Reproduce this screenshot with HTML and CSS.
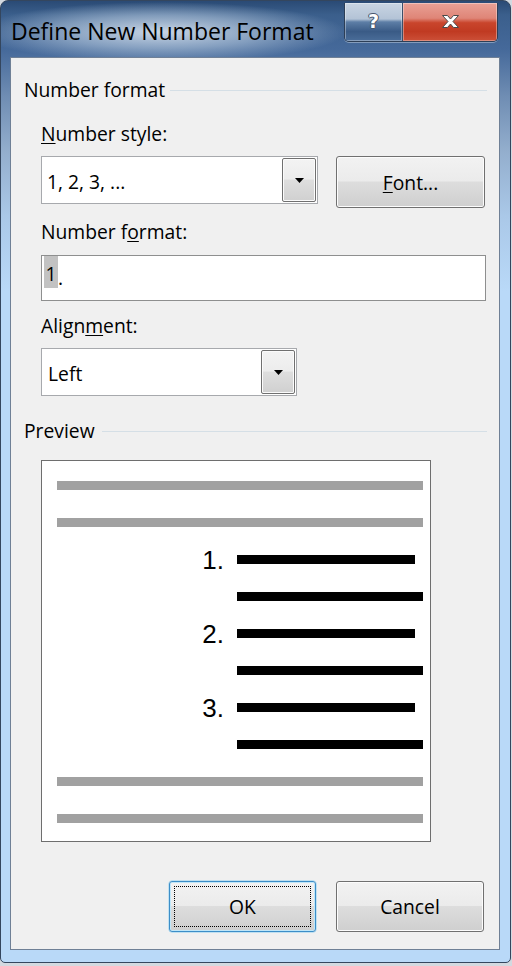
FILE: index.html
```html
<!DOCTYPE html>
<html>
<head>
<meta charset="utf-8">
<title>Define New Number Format</title>
<link rel="stylesheet" href="styles.css">
</head>
<body>
<div class="window">
  <div class="titlebar">
    <div class="title">Define New Number Format</div>
    <div class="caption">
      <div class="cap-btn help"><span class="qmark">?</span></div>
      <div class="cap-btn close">
        <svg width="19" height="15" viewBox="0 0 19 15"><path d="M1.5 1.5 H6.5 L9.5 5 L12.5 1.5 H17.5 L12 7.5 L17.5 13.5 H12.5 L9.5 10 L6.5 13.5 H1.5 L7 7.5 Z" fill="#ffffff" stroke="#4a4a4a" stroke-width="1" stroke-linejoin="round"/></svg>
      </div>
    </div>
  </div>
  <div class="client">
    <div class="group-head head-format"><span>Number format</span><span class="group-rule"></span></div>
    <div class="fields">
      <div class="label label-style"><u>N</u>umber style:</div>
      <div class="row">
        <div class="combo combo-style">
          <span class="combo-text">1, 2, 3, ...</span>
          <div class="drop"><svg width="9" height="5" viewBox="0 0 9 5"><path d="M0 0 H9 L4.5 5 Z" fill="#000"/></svg></div>
        </div>
        <div class="button font-btn"><span><u>F</u>ont...</span></div>
      </div>
      <div class="label label-format">Number f<u>o</u>rmat:</div>
      <div class="textbox"><span class="sel">1</span>.</div>
      <div class="label label-align">Align<u>m</u>ent:</div>
      <div class="combo combo-align">
        <span class="combo-text">Left</span>
        <div class="drop"><svg width="9" height="5" viewBox="0 0 9 5"><path d="M0 0 H9 L4.5 5 Z" fill="#000"/></svg></div>
      </div>
    </div>
    <div class="group-head head-preview"><span>Preview</span><span class="group-rule"></span></div>
    <div class="fields">
      <div class="preview">
        <div class="bar grey"></div>
        <div class="bar grey"></div>
        <div class="item"><span class="num">1.</span><div class="bar black short"></div></div>
        <div class="item"><div class="bar black long"></div></div>
        <div class="item"><span class="num">2.</span><div class="bar black short"></div></div>
        <div class="item"><div class="bar black long"></div></div>
        <div class="item"><span class="num">3.</span><div class="bar black short"></div></div>
        <div class="item"><div class="bar black long"></div></div>
        <div class="bar grey"></div>
        <div class="bar grey"></div>
      </div>
      <div class="actions">
        <div class="button ok-btn"><span>OK</span></div>
        <div class="button cancel-btn"><span>Cancel</span></div>
      </div>
    </div>
  </div>
</div>
</body>
</html>
```
FILE: styles.css
```css
* { box-sizing: border-box; }
html, body { margin: 0; padding: 0; }
body {
  width: 512px;
  height: 966px;
  overflow: hidden;
  background: #d3d9e0;
  font-family: "Open Sans", "Noto Sans", sans-serif;
  font-size: 19.3px;
  color: #000;
}
u { text-decoration: underline; text-underline-offset: 2px; text-decoration-thickness: 1px; }

.window {
  width: 511px;
  height: 963px;
  border: 1px solid #34465e;
  border-radius: 8px 8px 5px 5px;
  overflow: hidden;
  display: flex;
  flex-direction: column;
  background: linear-gradient(180deg, #2a4a75 0px, #3b5f8c 14px, #45699a 48px, #6f8db3 95px, #93aecd 150px, #aac8e8 215px, #b9d9f8 290px, #b9d9f8 100%);
}

.titlebar {
  height: 56px;
  flex: none;
  display: flex;
  align-items: flex-start;
  padding: 0 12px 0 10px;
  background:
    radial-gradient(ellipse 185px 30px at 160px 31px, rgba(208,220,234,0.95) 0%, rgba(176,196,218,0.6) 55%, rgba(150,175,205,0) 100%);
}
.title {
  flex: 1;
  margin-top: 16px;
  font-size: 23px;
  line-height: 28px;
  color: #000;
  white-space: nowrap;
}
.caption {
  display: flex;
  margin-top: 2px;
  height: 39px;
  border: 1px solid #2c3e56;
  border-top: none;
  border-radius: 0 0 5px 5px;
  overflow: hidden;
  box-shadow: 0 1px 0 rgba(255,255,255,0.35);
}
.cap-btn {
  height: 100%;
  display: flex;
  align-items: center;
  justify-content: center;
  box-shadow: inset 0 0 0 1px rgba(255,255,255,0.35);
}
.help {
  width: 58px;
  border-right: 1px solid #3b4f6a;
  background: linear-gradient(180deg, #c9d5e3 0%, #b3c3d6 42%, #5d7ea6 50%, #3a5b86 75%, #4a6d99 100%);
}
.qmark {
  font-family: "DejaVu Sans", "Liberation Sans", sans-serif;
  font-weight: bold;
  font-size: 19px;
  line-height: 20px;
  color: #ffffff;
  margin-top: -3px;
  text-shadow: 0 0 1px #33445a, 1px 0 0 #4a5a70, -1px 0 0 #4a5a70, 0 1px 0 #4a5a70, 0 -1px 0 #4a5a70;
}
.close {
  width: 94px;
  background: linear-gradient(180deg, #e9a196 0%, #df8577 40%, #c9452c 52%, #c03a22 75%, #cc5038 100%);
}
.close svg { margin-top: -2px; }

.client {
  width: 490px;
  height: 893px;
  flex: none;
  margin-left: 9px;
  background: #f0f0f0;
  border: 1px solid #6f8096;
  padding: 0 12px 0 13px;
  display: flex;
  flex-direction: column;
}

.group-head {
  display: flex;
  align-items: center;
  height: 24px;
  line-height: 24px;
  white-space: nowrap;
}
.head-format { margin-top: 20px; }
.head-preview { margin-top: 23px; }
.group-rule {
  flex: 1;
  height: 1px;
  background: #d5dfe6;
  margin-left: 5px;
}
.head-preview .group-rule { margin-left: 7px; }

.fields {
  padding-left: 17px;
  display: flex;
  flex-direction: column;
  align-items: flex-start;
}
.label {
  height: 24px;
  line-height: 24px;
  white-space: nowrap;
}
.label-style { margin-top: 20px; }
.label-format { margin-top: 12px; }
.label-align { margin-top: 13px; }

.row {
  display: flex;
  align-items: flex-start;
  margin-top: 10px;
}

.combo {
  height: 48px;
  background: #fff;
  border: 1px solid #a7a9ad;
  padding: 1px;
  display: flex;
  align-items: center;
}
.combo-style { width: 277px; }
.combo-align { width: 256px; margin-top: 10px; }
.combo-text {
  flex: 1;
  padding-left: 4px;
  padding-top: 2px;
  white-space: nowrap;
}
.combo-align .combo-text { padding-left: 5px; }
.drop {
  width: 34px;
  height: 44px;
  border: 1px solid #707070;
  border-radius: 2px;
  box-shadow: inset 0 0 0 1px #fbfbfb;
  background: linear-gradient(180deg, #f3f3f3 0%, #ececec 48%, #dedede 50%, #d0d0d0 100%);
  display: flex;
  align-items: center;
  justify-content: center;
}

.button {
  border: 1px solid #707070;
  border-radius: 3px;
  box-shadow: inset 0 0 0 1px #fcfcfc;
  background: linear-gradient(180deg, #f2f2f2 0%, #ebebeb 48%, #dddddd 50%, #cfcfcf 100%);
  display: flex;
  align-items: center;
  justify-content: center;
  white-space: nowrap;
}
.font-btn {
  width: 149px;
  height: 52px;
  margin-left: 18px;
}

.textbox {
  margin-top: 11px;
  width: 445px;
  height: 46px;
  background: #fff;
  border: 1px solid #8e8f8f;
  padding: 0 0 0 2px;
  white-space: nowrap;
  line-height: 44px;
}
.sel {
  display: inline-block;
  height: 32px;
  line-height: 35px;
  padding: 0 1.5px;
  background: #c2c2c2;
  vertical-align: top;
}

.preview {
  margin-top: 17px;
  width: 390px;
  height: 382px;
  background: #fff;
  border: 1px solid #6e6e6e;
  padding: 20px 7px 0 15px;
  display: flex;
  flex-direction: column;
  gap: 28px;
}
.bar { height: 9px; flex: none; }
.grey { width: 366px; background: #a1a1a1; }
.item {
  height: 9px;
  display: flex;
  align-items: center;
  padding-left: 180px;
  position: relative;
}
.item .num {
  position: absolute;
  left: 0;
  top: 1px;
  width: 167px;
  height: 9px;
  text-align: right;
  font-family: "Liberation Sans", Arial, sans-serif;
  font-size: 26px;
  line-height: 9px;
  white-space: nowrap;
}
.black { background: #000; }
.short { width: 178px; }
.long { width: 186px; }

.actions {
  margin-top: 39px;
  align-self: stretch;
  display: flex;
  justify-content: flex-end;
  padding-right: 3px;
  gap: 20px;
}
.ok-btn, .cancel-btn { height: 51px; }
.ok-btn {
  width: 147px;
  position: relative;
  border-color: #3c8ec8;
  box-shadow: inset 0 0 0 1px #bfe6f8, 0 0 0 0.5px #8fd0f0;
}
.ok-btn::after {
  content: "";
  position: absolute;
  inset: 4px;
  border: 1px dotted #000;
}
.cancel-btn { width: 148px; }
```
